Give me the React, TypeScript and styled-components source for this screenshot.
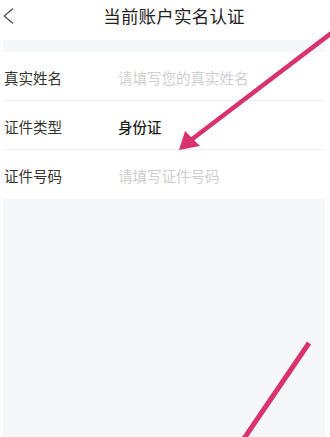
import React from "react";
import styled, { createGlobalStyle } from "styled-components";

const GlobalStyle = createGlobalStyle`
  html, body {
    margin: 0;
    padding: 0;
    height: 100%;
    background: #ffffff;
  }
  #root {
    min-height: 100%;
  }
`;

const Page = styled.div`
  position: relative;
  display: flex;
  flex-direction: column;
  min-height: 437px;
  padding: 0 5px 0 3px;
  box-sizing: border-box;
  background: #ffffff;
  font-family: "Noto Sans CJK SC", "Noto Sans", sans-serif;
  overflow: hidden;
`;

const Header = styled.div`
  display: grid;
  grid-template-columns: 32px 1fr 12px;
  align-items: center;
  height: 40px;
  padding-bottom: 9px;
  box-sizing: border-box;
`;

const Back = styled.div`
  display: flex;
  align-items: center;
`;

const Title = styled.div`
  text-align: center;
  font-size: 17.5px;
  color: #222222;
  letter-spacing: 0.2px;
`;

const Band = styled.div`
  height: 12px;
  background: #f6f7f9;
`;

const Form = styled.div`
  display: flex;
  flex-direction: column;
`;

const Row = styled.div<{ last?: boolean }>`
  display: flex;
  align-items: center;
  height: 49px;
  padding: 2px 0 0 1px;
  box-sizing: border-box;
  border-bottom: ${({ last }) => (last ? "none" : "1px solid #efefef")};
`;

const Label = styled.div`
  width: 114px;
  font-size: 14.5px;
  color: #333333;
`;

const Value = styled.div<{ placeholder?: boolean }>`
  font-size: 14.5px;
  color: ${({ placeholder }) => (placeholder ? "#cfcfcf" : "#1f1f1f")};
  font-weight: ${({ placeholder }) => (placeholder ? 400 : 500)};
`;

const Fill = styled.div`
  flex: 1;
  background: #f6f7f9;
`;

const Overlay = styled.svg`
  position: absolute;
  left: 0;
  top: 0;
  width: 330px;
  height: 437px;
  pointer-events: none;
`;

const fields = [
  { label: "真实姓名", value: "请填写您的真实姓名", placeholder: true },
  { label: "证件类型", value: "身份证", placeholder: false },
  { label: "证件号码", value: "请填写证件号码", placeholder: true },
];

export default function App(): JSX.Element {
  return (
    <>
      <GlobalStyle />
      <Page>
        <Header>
          <Back>
            <svg width="12" height="18" viewBox="0 0 12 18">
              <path
                d="M10 1.5 L1.3 9 L10 16.5"
                fill="none"
                stroke="#555555"
                strokeWidth="1.3"
              />
            </svg>
          </Back>
          <Title>当前账户实名认证</Title>
          <div />
        </Header>
        <Band />
        <Form>
          {fields.map((f, i) => (
            <Row key={f.label} last={i === fields.length - 1}>
              <Label>{f.label}</Label>
              <Value placeholder={f.placeholder}>{f.value}</Value>
            </Row>
          ))}
        </Form>
        <Fill />
        <Overlay viewBox="0 0 330 437">
          <line
            x1="334"
            y1="31"
            x2="191"
            y2="140"
            stroke="#d8336f"
            strokeWidth="4.5"
          />
          <polygon points="179,150 185,131 200,146" fill="#d8336f" />
          <line
            x1="309"
            y1="343"
            x2="243"
            y2="440"
            stroke="#d8336f"
            strokeWidth="5"
          />
        </Overlay>
      </Page>
    </>
  );
}
